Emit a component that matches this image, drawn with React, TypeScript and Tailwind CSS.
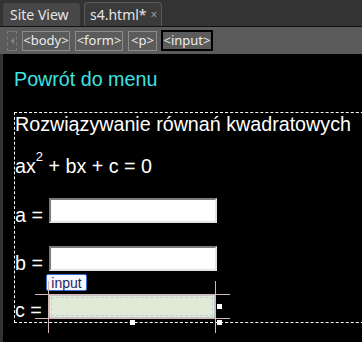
export default function App() {
  const crumbs = [
    { label: "<body>", w: "w-[48px]" },
    { label: "<form>", w: "w-[48px]" },
    { label: "<p>", w: "w-[29px]" },
  ];

  return (
    <div className="flex h-[342px] w-[362px] flex-col overflow-hidden bg-black font-['Liberation_Sans',Arial,sans-serif]">
      {/* document tabs */}
      <div className="flex h-[26px] shrink-0 items-end gap-[4px] bg-[#333333] pl-[3px] font-['Noto_Sans',sans-serif] text-[14px] text-[#e6e6e6]">
        <div className="h-[23px] w-[77px] rounded-t-[3px] bg-[#474747] pl-[7px] pt-[2px] leading-[19px]">
          Site View
        </div>
        <div className="flex h-[24px] w-[78px] items-start gap-[4px] rounded-t-[4px] border border-b-0 border-[#5a5a5a] bg-[#3b3b3b] pl-[5px] pt-[2px] leading-[19px]">
          <span>s4.html*</span>
          <span className="text-[12px] text-[#9a9a9a]">×</span>
        </div>
      </div>
      <div className="h-px shrink-0 bg-[#111111]" />

      {/* tag selector */}
      <div className="flex h-[27px] shrink-0 items-center gap-[5px] bg-[#5b5b5b] pl-[7px] font-['Noto_Sans',sans-serif] text-[13px] text-[#ececec]">
        <div className="flex h-[20px] w-[10px] items-center justify-center border border-dashed border-[#7a7a7a]">
          <div className="h-0 w-0 border-y-[3px] border-r-[3px] border-y-transparent border-r-[#8a8a8a]" />
        </div>
        {crumbs.map((c) => (
          <div
            key={c.label}
            className={`flex h-[20px] ${c.w} items-center justify-center border border-[#8c8c8c] leading-none`}
          >
            {c.label}
          </div>
        ))}
        <div className="-ml-px flex h-[21px] w-[52px] items-center justify-center border-2 border-black leading-none">
          {"<input>"}
        </div>
      </div>

      {/* design view */}
      <div className="flex flex-1">
        <div className="w-[3px] shrink-0 bg-[#333333]" />
        <div className="relative flex-1 text-[19.7px] text-white">
          <div className="ml-[11px] mt-[14px] h-[23px] leading-[23px] text-[#3fe2e2]">
            Powrót do menu
          </div>

          <div className="ml-[11px] mt-[21px] w-[380px] border-y border-l border-dashed border-white">
            <div className="h-[23px] leading-[23px]">
              Rozwiązywanie równań kwadratowych
            </div>
            <div className="mt-[19px] h-[23px] leading-[23px]">
              ax<sup className="top-[-12px] text-[13px]">2</sup> + bx + c = 0
            </div>

            <div className="mt-[20px] flex h-[25px] items-start">
              <span className="mt-[6px] w-[34px] shrink-0 leading-[23px]">a =</span>
              <input
                type="text"
                className="h-[25px] w-[168px] border-2 border-b-[#e4e4e4] border-l-[#7c7c7c] border-r-[#e4e4e4] border-t-[#7c7c7c] bg-white"
              />
            </div>

            <div className="mt-[23px] flex h-[25px] items-start">
              <span className="mt-[6px] w-[34px] shrink-0 leading-[23px]">b =</span>
              <input
                type="text"
                className="h-[25px] w-[168px] border-2 border-b-[#e4e4e4] border-l-[#7c7c7c] border-r-[#e4e4e4] border-t-[#7c7c7c] bg-white"
              />
            </div>

            <div className="mt-[24px] flex h-[27px] items-start">
              <span className="mt-[4px] w-[34px] shrink-0 leading-[23px]">c =</span>
              <input
                type="text"
                className="h-[23px] w-[166px] border border-[#c4c4c4] bg-[#e1ead6] outline-1 -outline-offset-3 outline-dashed outline-[#bcd3e4]"
              />
            </div>
          </div>

          {/* selection overlay */}
          <div className="absolute left-[43px] top-[220px] flex h-[17px] w-[41px] items-center justify-center rounded-[2px] border border-[#3a6fd2] bg-[#f6f8fd] text-[14px] leading-none text-[#2b1f5c]">
            input
          </div>
          <div className="absolute left-[32px] top-[240px] h-px w-[195px] bg-[#d6b7b7]" />
          <div className="absolute left-[32px] top-[264px] h-px w-[195px] bg-[#d6b7b7]" />
          <div className="absolute left-[45px] top-[227px] h-[52px] w-px bg-[#d6b7b7]" />
          <div className="absolute left-[212px] top-[227px] h-[52px] w-px bg-[#d6b7b7]" />
          <div className="absolute left-[214px] top-[250px] h-[5px] w-[5px] bg-white" />
          <div className="absolute left-[214px] top-[266px] h-[5px] w-[5px] bg-white" />
          <div className="absolute left-[127px] top-[266px] h-[5px] w-[5px] bg-white" />
        </div>
      </div>
    </div>
  );
}
